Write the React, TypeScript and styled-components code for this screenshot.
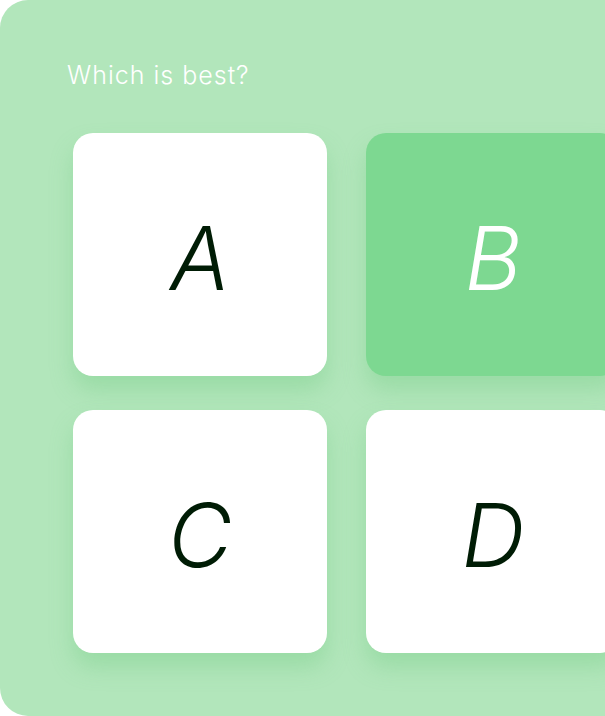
import styled, { createGlobalStyle } from "styled-components";

const GlobalStyle = createGlobalStyle`
    html, body {
        margin: 0;
        padding: 0;
        background: #ffffff;
    }
    body {
        font-family: Inter, "Noto Sans", sans-serif;
    }
`;

type Choice = {
    letter: string;
    selected?: boolean;
}

const choices: Choice[] = [
    { letter: "A" },
    { letter: "B", selected: true },
    { letter: "C" },
    { letter: "D" },
];

const Viewport = styled.div`
    width: 605px;
    height: 716px;
    overflow: hidden;
`;

const Panel = styled.div`
    box-sizing: border-box;
    width: 693px;
    height: 716px;
    background: #b2e6bb;
    border-radius: 28px 0 0 28px;
    padding: 60px 73px 0 73px;
`;

const Title = styled.h2`
    margin: 0 0 43px -6px;
    font-size: 25px;
    line-height: 30px;
    font-weight: 300;
    color: #ffffff;
    letter-spacing: 1px;
`;

const Grid = styled.div`
    display: grid;
    grid-template-columns: 254px 254px;
    grid-auto-rows: 243px;
    column-gap: 39px;
    row-gap: 34px;
`;

const Card = styled.div<{ $selected?: boolean }>`
    display: flex;
    align-items: center;
    justify-content: center;
    padding-top: 6px;
    box-sizing: border-box;
    border-radius: 20px;
    background: ${(p) => (p.$selected ? "#7dd891" : "#ffffff")};
    color: ${(p) => (p.$selected ? "#ffffff" : "#001c05")};
    box-shadow: 0 14px 22px rgba(110, 200, 125, 0.35);
    font-size: 88px;
    font-style: italic;
    font-weight: 300;
    line-height: 1;
`;

const App = () => {
    return (
        <>
            <GlobalStyle />
            <Viewport>
                <Panel>
                    <Title>Which is best?</Title>
                    <Grid>
                        {choices.map((c) => (
                            <Card key={c.letter} $selected={c.selected}>
                                {c.letter}
                            </Card>
                        ))}
                    </Grid>
                </Panel>
            </Viewport>
        </>
    );
};

export default App;
